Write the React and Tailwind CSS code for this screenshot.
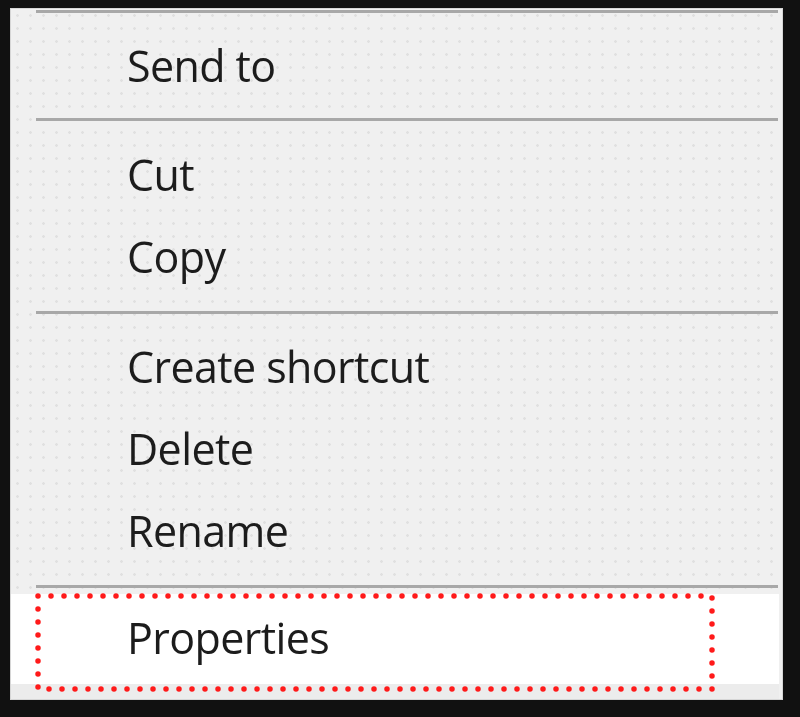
import React from "react";

const font = { fontFamily: '"Open Sans", "Noto Sans", sans-serif' };

function Item({ label }) {
  return (
    <div className="h-[82px] flex items-center pl-[116px]">
      <span className="text-[43px] leading-none text-[#1c1c1c] tracking-[-0.6px] mt-[-2px] blur-[0.3px]">{label}</span>
    </div>
  );
}

function Sep({ h, top }) {
  return (
    <div className={`${h} flex flex-col pl-[25px] pr-[4px]`}>
      <div className={`${top} h-[3px] w-full bg-[#a8a8a8]`} />
    </div>
  );
}

export default function App() {
  return (
    <div className="w-[800px] h-[717px] bg-[#111111] pt-[8px] pl-[10px]" style={font}>
      <div className="w-[773px] h-[692px] border border-[#d6d6d6] bg-[#f0f0f0] flex flex-col overflow-hidden">
        <div className="flex flex-col bg-[radial-gradient(circle,#e0e0e0_1px,transparent_1.6px)] bg-[length:13px_13px]">
          <Sep h="h-[16px]" top="mt-[1px]" />
          <Item label="Send to" />
          <Sep h="h-[27px]" top="mt-[11px]" />
          <Item label="Cut" />
          <Item label="Copy" />
          <Sep h="h-[28px]" top="mt-[13px]" />
          <Item label="Create shortcut" />
          <Item label="Delete" />
          <Item label="Rename" />
          <Sep h="h-[22px]" top="mt-[13px]" />
        </div>
        <div className="relative h-[90px] bg-white mr-[3px] flex items-center pl-[116px]">
          <span className="text-[43px] leading-none text-[#1c1c1c] tracking-[-0.6px] mt-[-3px] blur-[0.3px]">Properties</span>
          <svg
            className="absolute left-[22px] top-[-3px] overflow-visible"
            width="684"
            height="103"
            viewBox="0 0 684 103"
          >
            <rect
              x="5"
              y="5"
              width="674"
              height="93"
              fill="none"
              stroke="#ff1a1a"
              strokeWidth="5.5"
              strokeDasharray="0 13"
              strokeLinecap="round"
            />
          </svg>
        </div>
        <div className="flex-1 bg-[#ececec] mr-[3px]" />
      </div>
    </div>
  );
}
